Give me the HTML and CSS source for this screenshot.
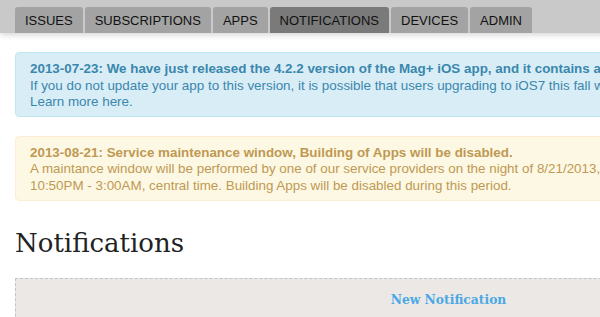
FILE: index.html
```html
<!DOCTYPE html>
<html>
	<head>
		<meta charset="utf-8" />
		<title>Notifications</title>
		<link rel="stylesheet" href="styles.css">
	</head>

	<body>
		<div class="topbar">
			<ul class="tabs">
				<li><a href="#">ISSUES</a></li>
				<li><a href="#">SUBSCRIPTIONS</a></li>
				<li><a href="#">APPS</a></li>
				<li class="active"><a href="#">NOTIFICATIONS</a></li>
				<li><a href="#">DEVICES</a></li>
				<li><a href="#">ADMIN</a></li>
			</ul>
		</div>
		<div class="content">
			<div class="alert alert-info">
				<strong>2013-07-23: We have just released the 4.2.2 version of the Mag+ iOS app, and it contains a critical fix for iOS7.</strong><br>
				If you do not update your app to this version, it is possible that users upgrading to iOS7 this fall will experience problems.<br>
				<a href="#">Learn more here</a>.
			</div>
			<div class="alert alert-warning">
				<strong>2013-08-21: Service maintenance window, Building of Apps will be disabled.</strong><br>
				A maintance window will be performed by one of our service providers on the night of 8/21/2013,<br>
				10:50PM - 3:00AM, central time. Building Apps will be disabled during this period.
			</div>
			<h1>Notifications</h1>
			<div class="new-box">
				<a href="#">New Notification</a>
			</div>
		</div>
	</body>
</html>
```

FILE: styles.css
```css
* {
	padding: 0px;
	margin: 0px;
}
html,
body {
	overflow: hidden;
}
body {
	width: 900px;
	font-family: "Liberation Sans", Arial, sans-serif;
	font-size: 13px;
	background-color: #fff;
}
.topbar {
	height: 33px;
	padding-left: 15px;
	background-color: #c9c9c9;
	box-shadow: 0 2px 6px rgba(0, 0, 0, 0.16);
}
.tabs {
	display: flex;
	gap: 2px;
	list-style: none;
	padding-top: 7px;
}
.tabs li a {
	display: block;
	height: 26px;
	line-height: 27px;
	padding: 0 10px;
	color: #111;
	text-decoration: none;
	background-color: #a3a3a3;
	border-radius: 3px 3px 0 0;
}
.tabs li.active a {
	background-color: #7a7a7a;
}
.content {
	padding: 19px 19px 0 15px;
}
.alert {
	padding: 8px 14px 5px;
	font-size: 13.4px;
	line-height: 16.6px;
	border: 1px solid;
	border-radius: 4px;
	white-space: nowrap;
}
.alert-info {
	color: #3a87ad;
	background-color: #d9edf7;
	border-color: #bce8f1;
	margin-bottom: 19px;
}
.alert-info a {
	color: #3a87ad;
	text-decoration: none;
}
.alert-warning {
	color: #c09853;
	background-color: #fcf8e3;
	border-color: #fbeed5;
}
h1 {
	margin-top: 25px;
	font-family: Georgia, "DejaVu Serif", serif;
	font-weight: normal;
	font-size: 26px;
	line-height: 34px;
	color: #222;
}
.new-box {
	margin-top: 18px;
	height: 60px;
	padding-top: 13px;
	text-align: center;
	background-color: #ece8e5;
	border-top: 1px dashed #c4c4c4;
	border-left: 1px dashed #c4c4c4;
}
.new-box a {
	font-family: Georgia, "DejaVu Serif", serif;
	font-weight: bold;
	font-size: 12.3px;
	color: #4aa8e6;
	text-decoration: none;
}
```
